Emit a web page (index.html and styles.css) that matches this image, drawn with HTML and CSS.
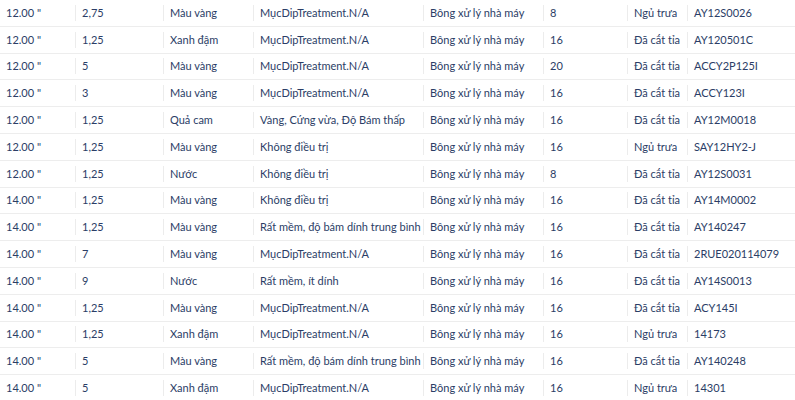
FILE: index.html
```html
<!DOCTYPE html>
<html lang="vi">
<head>
<meta charset="utf-8">
<link rel="stylesheet" href="styles.css">
</head>
<body>
<div class="table">
  <div class="row"><div class="cell">12.00 "</div><div class="cell">2,75</div><div class="cell">Màu vàng</div><div class="cell">MụcDipTreatment.N/A</div><div class="cell">Bông xử lý nhà máy</div><div class="cell">8</div><div class="cell">Ngủ trưa</div><div class="cell">AY12S0026</div></div>
  <div class="row"><div class="cell">12.00 "</div><div class="cell">1,25</div><div class="cell">Xanh đậm</div><div class="cell">MụcDipTreatment.N/A</div><div class="cell">Bông xử lý nhà máy</div><div class="cell">16</div><div class="cell">Đã cắt tỉa</div><div class="cell">AY120501C</div></div>
  <div class="row"><div class="cell">12.00 "</div><div class="cell">5</div><div class="cell">Màu vàng</div><div class="cell">MụcDipTreatment.N/A</div><div class="cell">Bông xử lý nhà máy</div><div class="cell">20</div><div class="cell">Đã cắt tỉa</div><div class="cell">ACCY2P125I</div></div>
  <div class="row"><div class="cell">12.00 "</div><div class="cell">3</div><div class="cell">Màu vàng</div><div class="cell">MụcDipTreatment.N/A</div><div class="cell">Bông xử lý nhà máy</div><div class="cell">16</div><div class="cell">Đã cắt tỉa</div><div class="cell">ACCY123I</div></div>
  <div class="row"><div class="cell">12.00 "</div><div class="cell">1,25</div><div class="cell">Quả cam</div><div class="cell">Vàng, Cứng vừa, Độ Bám thấp</div><div class="cell">Bông xử lý nhà máy</div><div class="cell">16</div><div class="cell">Đã cắt tỉa</div><div class="cell">AY12M0018</div></div>
  <div class="row"><div class="cell">12.00 "</div><div class="cell">1,25</div><div class="cell">Màu vàng</div><div class="cell">Không điều trị</div><div class="cell">Bông xử lý nhà máy</div><div class="cell">16</div><div class="cell">Ngủ trưa</div><div class="cell">SAY12HY2-J</div></div>
  <div class="row"><div class="cell">12.00 "</div><div class="cell">1,25</div><div class="cell">Nước</div><div class="cell">Không điều trị</div><div class="cell">Bông xử lý nhà máy</div><div class="cell">8</div><div class="cell">Đã cắt tỉa</div><div class="cell">AY12S0031</div></div>
  <div class="row"><div class="cell">14.00 "</div><div class="cell">1,25</div><div class="cell">Màu vàng</div><div class="cell">Không điều trị</div><div class="cell">Bông xử lý nhà máy</div><div class="cell">16</div><div class="cell">Đã cắt tỉa</div><div class="cell">AY14M0002</div></div>
  <div class="row"><div class="cell">14.00 "</div><div class="cell">1,25</div><div class="cell">Màu vàng</div><div class="cell">Rất mềm, độ bám dính trung bình</div><div class="cell">Bông xử lý nhà máy</div><div class="cell">16</div><div class="cell">Đã cắt tỉa</div><div class="cell">AY140247</div></div>
  <div class="row"><div class="cell">14.00 "</div><div class="cell">7</div><div class="cell">Màu vàng</div><div class="cell">MụcDipTreatment.N/A</div><div class="cell">Bông xử lý nhà máy</div><div class="cell">16</div><div class="cell">Đã cắt tỉa</div><div class="cell">2RUE020114079</div></div>
  <div class="row"><div class="cell">14.00 "</div><div class="cell">9</div><div class="cell">Nước</div><div class="cell">Rất mềm, ít dính</div><div class="cell">Bông xử lý nhà máy</div><div class="cell">16</div><div class="cell">Đã cắt tỉa</div><div class="cell">AY14S0013</div></div>
  <div class="row"><div class="cell">14.00 "</div><div class="cell">1,25</div><div class="cell">Màu vàng</div><div class="cell">MụcDipTreatment.N/A</div><div class="cell">Bông xử lý nhà máy</div><div class="cell">16</div><div class="cell">Đã cắt tỉa</div><div class="cell">ACY145I</div></div>
  <div class="row"><div class="cell">14.00 "</div><div class="cell">1,25</div><div class="cell">Xanh đậm</div><div class="cell">MụcDipTreatment.N/A</div><div class="cell">Bông xử lý nhà máy</div><div class="cell">16</div><div class="cell">Ngủ trưa</div><div class="cell">14173</div></div>
  <div class="row"><div class="cell">14.00 "</div><div class="cell">5</div><div class="cell">Màu vàng</div><div class="cell">Rất mềm, độ bám dính trung bình</div><div class="cell">Bông xử lý nhà máy</div><div class="cell">16</div><div class="cell">Đã cắt tỉa</div><div class="cell">AY140248</div></div>
  <div class="row"><div class="cell">14.00 "</div><div class="cell">5</div><div class="cell">Xanh đậm</div><div class="cell">MụcDipTreatment.N/A</div><div class="cell">Bông xử lý nhà máy</div><div class="cell">16</div><div class="cell">Ngủ trưa</div><div class="cell">14301</div></div>
</div>
</body>
</html>
```
FILE: styles.css
```css
html, body {
  margin: 0;
  padding: 0;
  background: #ffffff;
}
body {
  font-family: "Lato", "Liberation Sans", sans-serif;
  font-size: 11px;
  color: #2b3d66;
}
.table {
  display: flex;
  flex-direction: column;
}
.row {
  display: grid;
  grid-template-columns: 75px 88px 90px 170px 120px 84px 60px 108px;
  height: 26.8px;
  box-sizing: border-box;
  border-bottom: 1px solid #ededed;
  align-items: center;
}
.cell {
  height: 16px;
  line-height: 16px;
  padding-left: 6px;
  border-left: 1px solid #ececec;
  white-space: nowrap;
}
.cell:first-child {
  border-left: none;
}
```
